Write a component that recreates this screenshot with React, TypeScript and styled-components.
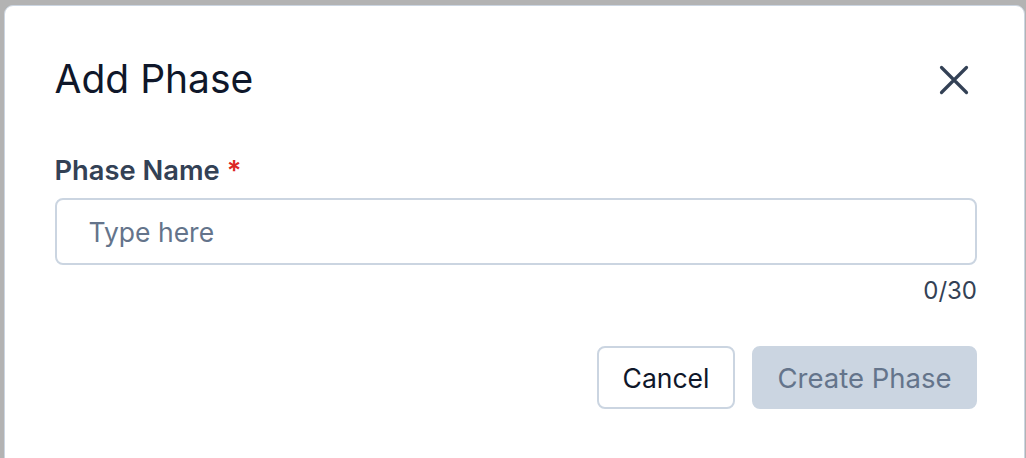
import React from "react";
import styled, { createGlobalStyle } from "styled-components";

const GlobalStyle = createGlobalStyle`
  html, body {
    margin: 0;
    height: 458px;
    overflow: hidden;
    background: #b3b3b3;
    font-family: Inter, "Noto Sans", sans-serif;
  }
`;

const Backdrop = styled.div`
  height: 458px;
  padding: 5px 0 0 4px;
  box-sizing: border-box;
  overflow: hidden;
`;

const Modal = styled.div`
  width: 1021px;
  min-height: 470px;
  box-sizing: border-box;
  background: #ffffff;
  border: 1.5px solid #cbd5e1;
  border-radius: 9px;
  padding: 49px 47px 0 49.5px;
  display: flex;
  flex-direction: column;
`;

const Header = styled.div`
  display: flex;
  align-items: center;
  justify-content: space-between;
  height: 48px;
`;

const Title = styled.h2`
  margin: 0;
  font-size: 39px;
  line-height: 48px;
  font-weight: 400;
  color: #0f172a;
`;

const CloseButton = styled.button`
  display: flex;
  align-items: center;
  justify-content: center;
  width: 40px;
  height: 40px;
  margin-right: 3px;
  margin-top: 2px;
  padding: 0;
  border: none;
  background: transparent;
  cursor: pointer;
`;

const Field = styled.div`
  margin-top: 52px;
  display: flex;
  flex-direction: column;
`;

const Label = styled.label`
  font-size: 27.3px;
  line-height: 32px;
  font-weight: 600;
  color: #334155;
`;

const Required = styled.span`
  color: #dc2626;
  margin-left: 7px;
`;

const Input = styled.input`
  margin-top: 11px;
  height: 67px;
  box-sizing: border-box;
  border: 2px solid #cbd5e1;
  border-radius: 8px;
  padding: 0 32px;
  font-family: inherit;
  font-size: 26.5px;
  color: #0f172a;
  outline: none;

  &::placeholder {
    color: #64748b;
  }
`;

const Counter = styled.div`
  margin-top: 10px;
  text-align: right;
  font-size: 24px;
  line-height: 32px;
  color: #334155;
`;

const Actions = styled.div`
  margin-top: 39px;
  display: flex;
  justify-content: flex-end;
  gap: 17px;
`;

const Button = styled.button<{ $primary?: boolean }>`
  height: 63px;
  padding: 0 ${(p) => (p.$primary ? "23.5px" : "23.5px")};
  box-sizing: border-box;
  border-radius: 8px;
  font-family: inherit;
  font-size: ${(p) => (p.$primary ? "27.5px" : "26.5px")};
  border: 2px solid #cbd5e1;
  background: ${(p) => (p.$primary ? "#cbd5e1" : "#ffffff")};
  color: ${(p) => (p.$primary ? "#64748b" : "#0f172a")};
  cursor: ${(p) => (p.$primary ? "not-allowed" : "pointer")};
`;

const CloseIcon = () => (
  <svg width="30" height="30" viewBox="0 0 30 30" fill="none">
    <path
      d="M2.5 2.5 L27.5 27.5 M27.5 2.5 L2.5 27.5"
      stroke="#334155"
      strokeWidth="3.2"
      strokeLinecap="round"
    />
  </svg>
);

export default function App() {
  return (
    <>
      <GlobalStyle />
      <Backdrop>
        <Modal>
          <Header>
            <Title>Add Phase</Title>
            <CloseButton aria-label="Close">
              <CloseIcon />
            </CloseButton>
          </Header>
          <Field>
            <Label>
              Phase Name<Required>*</Required>
            </Label>
            <Input placeholder="Type here" maxLength={30} />
            <Counter>0/30</Counter>
          </Field>
          <Actions>
            <Button>Cancel</Button>
            <Button $primary disabled>
              Create Phase
            </Button>
          </Actions>
        </Modal>
      </Backdrop>
    </>
  );
}
